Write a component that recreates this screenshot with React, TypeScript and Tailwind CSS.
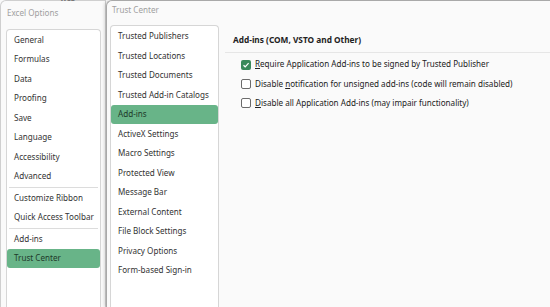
import React from "react";

const left = [
  "General",
  "Formulas",
  "Data",
  "Proofing",
  "Save",
  "Language",
  "Accessibility",
  "Advanced",
  "|",
  "Customize Ribbon",
  "Quick Access Toolbar",
  "|",
  "Add-ins",
  "*Trust Center",
];

const tc = [
  "Trusted Publishers",
  "Trusted Locations",
  "Trusted Documents",
  "Trusted Add-in Catalogs",
  "*Add-ins",
  "ActiveX Settings",
  "Macro Settings",
  "Protected View",
  "Message Bar",
  "External Content",
  "File Block Settings",
  "Privacy Options",
  "Form-based Sign-in",
];

function Item({ label }: { label: string }) {
  if (label === "|") return <div className="mx-[2px] my-[0.5px] h-px bg-[#dcdcdc]" />;
  const sel = label.startsWith("*");
  const text = sel ? label.slice(1) : label;
  return (
    <div
      className={
        "flex h-[19.5px] items-center whitespace-nowrap rounded-[3px] px-[7px] " +
        (sel ? "bg-[#68b488] text-[#1e3a2a]" : "text-[#333333]")
      }
    >
      {text}
    </div>
  );
}

function Check({ checked }: { checked?: boolean }) {
  return checked ? (
    <div className="flex h-[10px] w-[10px] shrink-0 items-center justify-center rounded-[2px] bg-[#3a8a5a]">
      <svg width="8" height="8" viewBox="0 0 8 8">
        <path d="M1.5 4.2 L3.2 5.8 L6.6 2.2" stroke="white" strokeWidth="1.2" fill="none" />
      </svg>
    </div>
  ) : (
    <div className="h-[10px] w-[10px] shrink-0 rounded-[2px] border border-[#6b6b6b] bg-white" />
  );
}

export default function App() {
  return (
    <div
      className="relative flex h-[307px] w-[550px] overflow-hidden bg-[#f9f9f9] text-[8.1px]"
      style={{ fontFamily: '"Noto Sans", "Open Sans", sans-serif' }}
    >
      <div className="absolute left-[60px] top-[-6px] text-[7px] font-bold text-[#777]">Web</div>
      {/* Excel Options window */}
      <div className="flex w-[106px] shrink-0 flex-col rounded-tl-[6px] border-l border-t border-r border-[#cfcfcf] bg-[#fafafa]">
        <div className="h-[28px] pl-[6px] pt-[6px] text-[8.1px] text-[#a0a0a0]">Excel Options</div>
        <div className="ml-[5px] mr-[4px] flex-1 rounded-t-[4px] border border-b-0 border-[#d6d6d6] bg-white">
          {left.map((l, i) => (
            <Item key={i} label={l} />
          ))}
        </div>
      </div>
      {/* Trust Center window */}
      <div className="flex flex-1 flex-col rounded-tl-[6px] border-l border-t border-[#a9a9a9] bg-[#fafafa] shadow-[-2px_0_3px_rgba(0,0,0,0.12)]">
        <div className="h-[24px] pl-[5px] pt-[3px] text-[8.1px] text-[#a0a0a0]">Trust Center</div>
        <div className="flex flex-1">
          <div className="ml-[3px] w-[109px] rounded-t-[4px] border border-b-0 border-[#d6d6d6] bg-white pt-[0.5px]">
            {tc.map((l, i) => (
              <Item key={i} label={l} />
            ))}
          </div>
          <div className="flex-1 pl-[6px] text-[#222]">
            <div className="ml-[8px] mt-[9px] text-[8.3px] font-bold">Add-ins (COM, VSTO and Other)</div>
            <div className="mt-[6px] h-px bg-[#e6e6e6]" />
            <div className="ml-[16px] mt-[5px] flex flex-col gap-[7px] whitespace-nowrap">
              <div className="flex items-center gap-[4px]">
                <Check checked />
                <span>
                  <u>R</u>equire Application Add-ins to be signed by Trusted Publisher
                </span>
              </div>
              <div className="flex items-center gap-[4px]">
                <Check />
                <span>
                  Disable <u>n</u>otification for unsigned add-ins (code will remain disabled)
                </span>
              </div>
              <div className="flex items-center gap-[4px]">
                <Check />
                <span>
                  <u>D</u>isable all Application Add-ins (may impair functionality)
                </span>
              </div>
            </div>
          </div>
        </div>
      </div>
    </div>
  );
}
